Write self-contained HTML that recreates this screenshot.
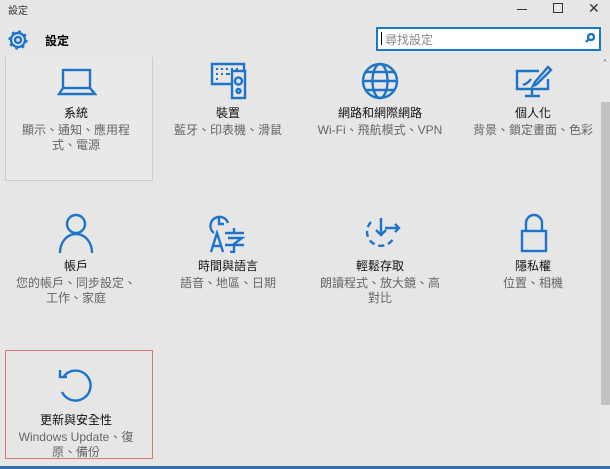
<!DOCTYPE html><html><head><meta charset="utf-8"><style>
body{margin:0;width:610px;height:469px;background:#e6e6e6;font-family:"Liberation Sans","Noto Sans CJK TC",sans-serif;position:relative;overflow:hidden;color:#000}
.a{position:absolute}
.t{position:absolute;width:152px;text-align:center;font-size:12px;line-height:15.5px}
.t b{font-weight:normal;display:block;color:#111;margin-bottom:1px}
.t span{color:#666}
svg{position:absolute;fill:none;stroke:#1e74c8;stroke-width:2.4}
</style></head><body>
<div class="a" style="left:8px;top:2px;font-size:10px;color:#333">設定</div>
<div class="a" style="left:517px;top:9px;width:10px;height:1px;background:#333"></div>
<div class="a" style="left:553px;top:3px;width:8px;height:8px;border:1px solid #333"></div>
<div class="a" style="left:588px;top:0px;font-size:14px;color:#333">✕</div>
<svg style="left:8px;top:30px" width="20" height="20" viewBox="0 0 20 20" stroke-width="1.2"><circle cx="10" cy="10" r="3"/><circle cx="10" cy="10" r="7"/><circle cx="10" cy="10" r="8.3" stroke-width="2.6" stroke-dasharray="2.6 3.9"/></svg>
<div class="a" style="left:45px;top:32px;font-size:12px;font-weight:bold">設定</div>
<div class="a" style="left:376px;top:27px;width:221px;height:20px;border:2px solid #1979ca;background:#fff"></div>
<div class="a" style="left:381px;top:32px;width:1px;height:13px;background:#000"></div>
<div class="a" style="left:385px;top:31px;font-size:12px;color:#888">尋找設定</div>
<svg style="left:585px;top:33px" width="10" height="10" viewBox="0 0 10 10" stroke="#999" stroke-width="0.9"><circle cx="6" cy="4" r="3"/><path d="M4 6L1 9"/></svg>
<div class="a" style="left:601px;top:57px;width:9px;height:412px;background:#e8e8e8"></div>
<div class="a" style="left:601px;top:102px;width:9px;height:303px;background:#c2c2c2"></div>
<div class="a" style="left:603px;top:58px;font-size:8px;color:#777">^</div>
<div class="a" style="left:0;top:466px;width:610px;height:3px;background:#3b6ea5"></div>
<div class="a" style="left:5px;top:57px;width:146px;height:123px;border:1px solid #ccc;border-top:none;background:#e9e9e9"></div>
<div class="a" style="left:5px;top:350px;width:146px;height:107px;border:1px solid #d9786f"></div>
<svg style="left:57px;top:68px" width="40" height="28" viewBox="0 0 40 28"><rect x="6" y="2" width="27" height="18"/><path d="M6 20L2 26H38L33 20"/></svg>
<svg style="left:210px;top:62px" width="38" height="38" viewBox="0 0 38 38"><path d="M22 22H2V2H34V8"/><path d="M6 7h2M11 7h2M16 7h2M21 7h2M26 7h2M6 12h2M11 12h2M16 12h4M6 17h2" stroke-width="2"/><rect x="22" y="9" width="13" height="27"/><circle cx="28.5" cy="19" r="3.5"/><circle cx="28.5" cy="29" r="2"/></svg>
<svg style="left:361px;top:62px" width="38" height="38" viewBox="0 0 38 38"><circle cx="19" cy="19" r="17"/><ellipse cx="19" cy="19" rx="7.5" ry="17"/><path d="M2 19H36M5 10H33M5 28H33"/></svg>
<svg style="left:515px;top:65px" width="38" height="34" viewBox="0 0 38 34"><path d="M24 6H2V24H33V14M17 24V31M10 31H25"/><path d="M33 2L36 5 22 19 18 21 20 17z"/><path d="M8 20c3-1 6-3 8-6"/></svg>
<div class="t" style="left:0;top:106px"><b>系統</b><span>顯示、通知、應用程<br>式、電源</span></div>
<div class="t" style="left:152px;top:106px"><b>裝置</b><span>藍牙、印表機、滑鼠</span></div>
<div class="t" style="left:304px;top:106px"><b>網路和網際網路</b><span>Wi-Fi、飛航模式、VPN</span></div>
<div class="t" style="left:457px;top:106px"><b>個人化</b><span>背景、鎖定畫面、色彩</span></div>
<svg style="left:58px;top:213px" width="36" height="40" viewBox="0 0 36 40"><circle cx="18" cy="11" r="9"/><path d="M2 40C2 29 9 21 18 21S34 29 34 40"/></svg>
<svg style="left:206px;top:213px" width="44" height="40" viewBox="0 0 44 40"><path d="M8 20A9 9 0 1 1 22 10"/><path d="M13 5V11H18"/><path d="M5 39L11 20 17 39M7 33H15"/><path d="M19 20H38M28 15V20M22 25H36L28 31V39H24M19 32H38"/></svg>
<svg style="left:361px;top:215px" width="40" height="36" viewBox="0 0 40 36"><path d="M20 20V3M15 15L20 20 25 15M24 13H38M34 9L38 13 34 17"/><path d="M10 7A14 14 0 1 0 33 22" stroke-dasharray="6 4"/></svg>
<svg style="left:519px;top:213px" width="30" height="40" viewBox="0 0 30 40"><path d="M7 18V10a8 8 0 0 1 16 0v8"/><rect x="3" y="18" width="24" height="20"/></svg>
<div class="t" style="left:0;top:259px"><b>帳戶</b><span>您的帳戶、同步設定、<br>工作、家庭</span></div>
<div class="t" style="left:152px;top:259px"><b>時間與語言</b><span>語音、地區、日期</span></div>
<div class="t" style="left:304px;top:259px"><b>輕鬆存取</b><span>朗讀程式、放大鏡、高<br>對比</span></div>
<div class="t" style="left:457px;top:259px"><b>隱私權</b><span>位置、相機</span></div>
<svg style="left:56px;top:366px" width="40" height="40" viewBox="0 0 40 40"><path d="M8 10A15 15 0 1 1 6 26"/><path d="M4 4V11H11"/></svg>
<div class="t" style="left:0;top:413px"><b>更新與安全性</b><span>Windows Update、復<br>原、備份</span></div>
</body></html>
